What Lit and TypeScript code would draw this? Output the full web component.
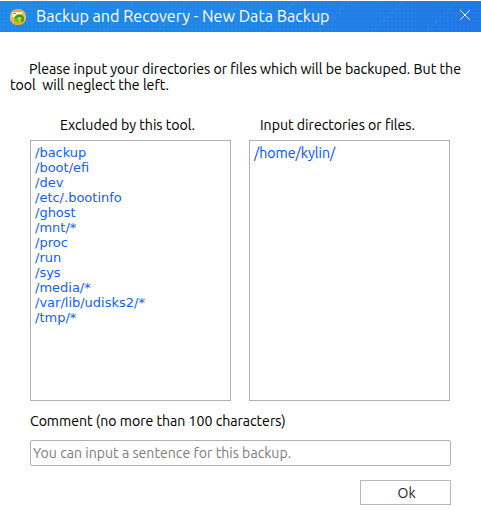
import { LitElement, html, css } from "lit";
import { customElement, state } from "lit/decorators.js";

@customElement("title-bar")
class TitleBar extends LitElement {
  static styles = css`
    :host {
      display: flex;
      align-items: center;
      height: 31px;
      padding: 0 10px 0 9px;
      box-sizing: border-box;
      color: #fff;
      background:
        radial-gradient(circle, rgba(10, 80, 200, 0.16) 0.6px, transparent 1px) 0 0 / 4px 4px,
        repeating-linear-gradient(135deg, transparent 0 17px, rgba(60, 165, 245, 0.14) 19px, transparent 21px 38px),
        linear-gradient(90deg, #218be9, #2189e8 50%, #2379e6);
    }
    .logo { width: 18px; height: 18px; flex: none; }
    .title {
      flex: 1;
      margin-left: 9px;
      font: 16.15px/31px Ubuntu, "Noto Sans", sans-serif;
      white-space: nowrap;
    }
    .close { width: 12px; height: 12px; flex: none; margin-bottom: 3px; }
  `;

  render() {
    return html`
      <svg class="logo" viewBox="0 0 18 18">
        <defs>
          <linearGradient id="gold" x1="0" y1="0" x2="0" y2="1">
            <stop offset="0" stop-color="#dca04a" />
            <stop offset=".5" stop-color="#f0c062" />
            <stop offset="1" stop-color="#eba71c" />
          </linearGradient>
        </defs>
        <rect x="1" y="1" width="16" height="16" rx="7" fill="url(#gold)" />
        <path d="M3.5 4.2h10v2H8L5 9H3.5z" fill="#fff6e4" />
        <path d="M4.2 4.9h2.6v1H4.2z" fill="#77705f" />
        <path d="M6.6 10.6C7.4 6.8 13.6 6.8 14 10.6C14 12 13.2 13 12.2 13.6" fill="none" stroke="#2fa51c" stroke-width="2.4" />
        <path d="M4.2 9.2L10.2 11.8L9.2 15L5.6 13.2z" fill="#5fce22" />
      </svg>
      <span class="title">Backup and Recovery - New Data Backup</span>
      <svg class="close" viewBox="0 0 12 12">
        <path d="M1 1L11 11M11 1L1 11" stroke="#fff" stroke-width="1" />
      </svg>
    `;
  }
}

@customElement("path-list")
class PathList extends LitElement {
  static properties = { paths: { attribute: false } };
  declare paths: string[];

  static styles = css`
    :host {
      display: block;
      box-sizing: border-box;
      height: 261px;
      padding: 4px;
      border: 1px solid #b0b0b0;
      background: #fff;
      color: #0f5ff6;
      font: 13px/15px "DejaVu Sans", sans-serif;
    }
    :host(.editable) {
      color: #0055ff;
      font: 14.15px/16px Ubuntu, "Noto Sans", sans-serif;
      -webkit-text-stroke: 0.08px;
    }
  `;

  render() {
    return this.paths.map((path) => html`<div>${path}</div>`);
  }
}

@customElement("app-root")
class AppRoot extends LitElement {
  @state() private excluded = [
    "/backup", "/boot/efi", "/dev", "/etc/.bootinfo", "/ghost", "/mnt/*",
    "/proc", "/run", "/sys", "/media/*", "/var/lib/udisks2/*", "/tmp/*",
  ];
  @state() private included = ["/home/kylin/"];

  static styles = css`
    :host {
      display: block;
      box-sizing: border-box;
      height: 510px;
      padding-top: 1px;
      overflow: hidden;
      background: #fff;
      color: #000;
      font: 14.15px/16px Ubuntu, "Noto Sans", sans-serif;
    }
    .intro, .heading, .comment { -webkit-text-stroke: 0.08px; }
    .intro { margin: 29px 0 0 10px; white-space: pre; }
    .first { padding-left: 19px; font-size: 14.18px; }
    .lists {
      display: grid;
      grid-template-columns: 201px 201px;
      column-gap: 18px;
      margin: 24px 0 0 30px;
    }
    .heading { height: 23px; white-space: nowrap; }
    .left { padding-left: 30px; }
    .right { padding-left: 11px; }
    .comment { margin: 12px 0 0 30px; font-size: 14.1px; white-space: nowrap; }
    .field {
      display: block;
      box-sizing: border-box;
      width: 421px;
      height: 26px;
      margin: 11px 0 0 30px;
      padding: 0 2px;
      border: 1px solid #b0b0b0;
      border-radius: 2px;
      outline: none;
      background: #fff;
      color: #000;
      font: 14.15px Ubuntu, "Noto Sans", sans-serif;
    }
    .field::placeholder { color: #7c7c7c; opacity: 1; }
    .ok {
      display: block;
      box-sizing: border-box;
      width: 91px;
      height: 25px;
      margin: 14px 0 0 360px;
      padding: 0 0 0 2px;
      border: 1px solid #b8b8b8;
      background: #fff;
      color: #262626;
      font: 14px Ubuntu, "Noto Sans", sans-serif;
    }
  `;

  render() {
    return html`
      <title-bar></title-bar>
      <div class="intro"><div class="first">Please input your directories or files which will be backuped. But the</div><div class="second">tool  will neglect the left.</div></div>
      <div class="lists">
        <div><div class="heading left">Excluded by this tool.</div><path-list .paths=${this.excluded}></path-list></div>
        <div><div class="heading right">Input directories or files.</div><path-list class="editable" .paths=${this.included}></path-list></div>
      </div>
      <div class="comment">Comment (no more than 100 characters)</div>
      <input class="field" placeholder="You can input a sentence for this backup." />
      <button class="ok">Ok</button>
    `;
  }
}
